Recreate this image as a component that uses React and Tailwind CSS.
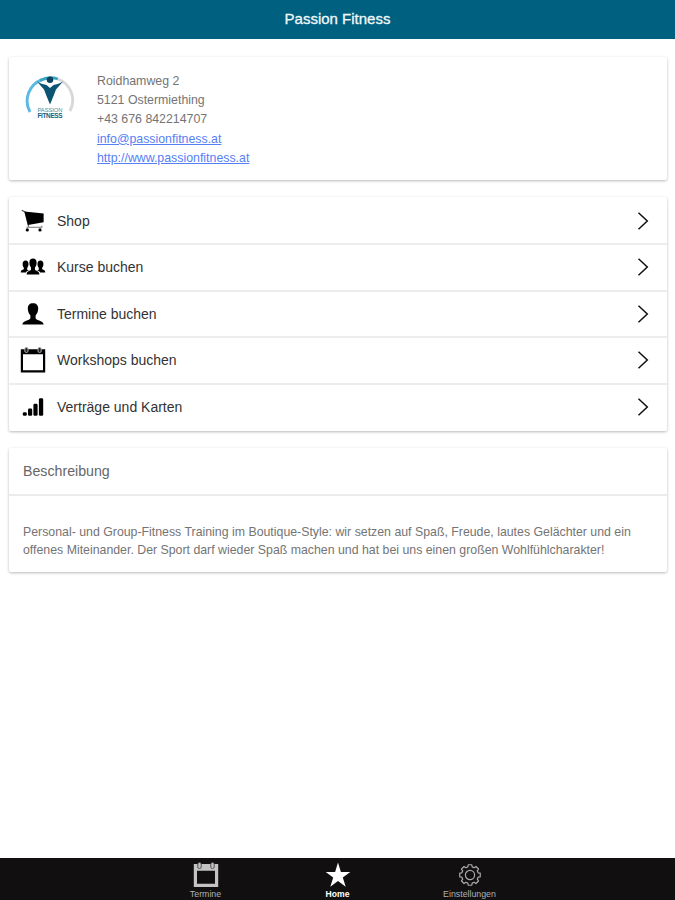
const menuItems = [
    { label: "Shop", icon: CartIcon },
    { label: "Kurse buchen", icon: GroupIcon },
    { label: "Termine buchen", icon: PersonIcon },
    { label: "Workshops buchen", icon: CalendarIcon },
    { label: "Verträge und Karten", icon: BarsIcon },
];

const cardShadow = "shadow-[0_1px_3px_rgba(0,0,0,0.28)]";

function CartIcon() {
    return (
        <svg width="26" height="26" viewBox="0 0 26 26">
            <path d="M1.800 2.200 L5 4 L8.600 18.600" fill="none" stroke="#555" strokeWidth="1.200" />
            <path d="M4.400 3.600 L23.600 5.600 V14.200 L8 17 Z" />
            <path d="M6.500 19.300 H21.800 V17.800" fill="none" stroke="#777" strokeWidth="1.100" />
            <circle cx="7.300" cy="21.900" r="1.600" />
            <circle cx="20" cy="21.900" r="1.600" />
        </svg>
    );
}

function GroupIcon() {
    return (
        <svg width="26" height="26" viewBox="0 0 26 26">
            <path d="M13 4.600c2.300 0 3.600 1.500 3.600 4.100 0 2-.6 3.600-1.600 4.800v2.300c.8 1.200 4.300 1.300 4.300 4.200v.5H6.700V20c0-2.900 3.500-3 4.300-4.200v-2.300c-1-1.200-1.600-2.800-1.600-4.800 0-2.600 1.300-4.100 3.600-4.100z" />
            <path
                id="side"
                d="M5.600 6.600c2 0 2.900 1.400 2.900 3.500 0 1.800-.5 3-1.300 3.800v1.500c.2.500.9.800 1.700 1.200-1.500.5-2.700 1.100-3 1.900H.8v-.5c0-2.200 2.500-2.100 3.100-3.300v-.8c-.8-.8-1.300-2-1.300-3.800 0-2.100 1-3.500 3-3.500z"
            />
            <use href="#side" transform="translate(26 0) scale(-1 1)" />
        </svg>
    );
}

function PersonIcon() {
    return (
        <svg width="26" height="26" viewBox="0 0 26 26">
            <path d="M13 2.200c3.500 0 5.200 2 5.200 5.400 0 2.900-1.100 5.300-2.600 6.800v2.800c.7 2.300 8 2.300 8 6.200H2.400c0-3.900 7.300-3.900 8-6.200v-2.800C8.900 12.900 7.800 10.500 7.800 7.600c0-3.400 1.700-5.400 5.200-5.400z" />
        </svg>
    );
}

function CalendarIcon() {
    return (
        <svg width="26" height="26" viewBox="0 0 26 26">
            <path fillRule="evenodd" d="M0.800 2.200h24.400v23.300H0.800z M3 7.300v16h20v-16z" />
            <g fill="#222" stroke="#aaa" strokeWidth="1">
                <rect x="4.800" y="0.500" width="3.200" height="5" rx="1.500" />
                <rect x="18" y="0.500" width="3.200" height="5" rx="1.500" />
            </g>
        </svg>
    );
}

function BarsIcon() {
    return (
        <svg width="26" height="26" viewBox="0 0 26 26">
            <rect x="2.800" y="18.200" width="4" height="3.600" rx="1.300" />
            <rect x="8" y="14.500" width="4.200" height="7.300" rx="1.300" />
            <rect x="13.400" y="9.800" width="4.200" height="12" rx="1.300" />
            <rect x="18.900" y="4.200" width="4.300" height="17.600" rx="1.300" />
        </svg>
    );
}

function Chevron() {
    return (
        <svg width="12" height="20" viewBox="0 0 12 20" fill="none" stroke="#111" strokeWidth="1.500">
            <path d="M1.500 1.800 L10.300 10 L1.500 18.200" />
        </svg>
    );
}

function GearIcon() {
    // 8 teeth around a circle
    const teeth = [0, 45, 90, 135, 180, 225, 270, 315];
    const points = teeth
        .flatMap((a) =>
            [
                [-15, 8.400],
                [-10, 10.400],
                [10, 10.400],
                [15, 8.400],
            ].map(([da, r]) => {
                const t = ((a + da) * Math.PI) / 180;
                return `${12 + r * Math.sin(t)},${12 - r * Math.cos(t)}`;
            })
        )
        .join(" ");

    return (
        <svg width="24" height="24" viewBox="0 0 24 24" fill="none" stroke="#aaa" strokeWidth="1.200">
            <polygon points={points} strokeLinejoin="round" />
            <circle cx="12" cy="12" r="4.600" />
        </svg>
    );
}

function StarIcon() {
    return (
        <svg width="26" height="26" viewBox="0 0 26 26" fill="#fff">
            <path d="M13 0.600 L15.900 9.900 L25.300 9.900 L17.800 15.500 L20.700 24.800 L13 19.100 L5.300 24.800 L8.200 15.500 L0.700 9.900 L10.100 9.900 Z" />
        </svg>
    );
}

function TabCalendarIcon() {
    return (
        <svg width="26" height="26" viewBox="0 0 26 26">
            <path fill="#c4c4c4" fillRule="evenodd" d="M0.800 2h24.400v23H0.800z M4 8.800v13h18v-13z" />
            <g fill="#c4c4c4" stroke="#444" strokeWidth="0.900">
                <rect x="4.800" y="0.500" width="3.400" height="6" rx="1.500" />
                <rect x="17.800" y="0.500" width="3.400" height="6" rx="1.500" />
            </g>
        </svg>
    );
}

function Logo() {
    return (
        <svg width="52" height="52" viewBox="0 0 52 52" className="block">
            <g fill="none" strokeWidth="2.900">
                <path d="M6 38 A22.800 22.800 0 0 1 18 5.600" stroke="#5bb9e2" />
                <path d="M16 6.500 A22.800 22.800 0 0 1 34 5" stroke="#3ba5c4" />
                <path d="M34 5 A22.800 22.800 0 0 1 46 37" stroke="#d6d8da" />
            </g>
            <circle cx="26" cy="5.800" r="3.300" fill="#0d4560" />
            <path
                d="M13 7.600 C17 9.800 20 10.900 22.500 10.900 L26 14 L29.500 10.900 C32 10.900 35 9.800 39 7.600 L32 15.500 L29.700 21.500 L26 30.500 L22.300 21.500 L20 15.500 Z"
                fill="#0d5472"
            />
            <text x="26" y="37.600" textAnchor="middle" fontSize="5.800" textLength="25" fill="#4b8a96">
                PASSION
            </text>
            <text x="26" y="43.700" textAnchor="middle" fontSize="6.400" fontWeight="bold" textLength="25" fill="#155d78">
                FITNESS
            </text>
        </svg>
    );
}

function TabItem({ label, icon, active }) {
    return (
        <div className={`flex w-[132px] flex-col items-center pt-[3px] ${active ? "text-white" : "text-[#b0b0b0]"}`}>
            <div className="flex h-[27px] items-center">{icon}</div>
            <span className={`leading-[12px] ${active ? "text-[8.600px] font-bold" : "text-[8.800px]"}`}>{label}</span>
        </div>
    );
}

export default function App() {
    return (
        <div className="flex h-[900px] w-[675px] flex-col bg-white font-['Liberation_Sans',sans-serif]">
            <header className="flex h-[39px] shrink-0 items-center justify-center bg-[#006080] text-[15px] text-[#f0f8fa] [-webkit-text-stroke:0.3px_#f0f8fa]">
                Passion Fitness
            </header>

            <main className="flex grow flex-col gap-[17px] pt-[18px] pr-[8px] pl-[9px]">
                <section className={`flex h-[123px] rounded-xs pt-[14.500px] pl-[15px] ${cardShadow}`}>
                    <div className="w-[73px] pt-[2px]">
                        <Logo />
                    </div>
                    <div className="text-[12.350px] leading-[19.400px] text-[#747474]">
                        <p>Roidhamweg 2</p>
                        <p>5121 Ostermiething</p>
                        <p>+43 676 842214707</p>
                        <p>
                            <a className="text-[#5580f5] underline">info@passionfitness.at</a>
                        </p>
                        <p>
                            <a className="text-[#5580f5] underline">http://www.passionfitness.at</a>
                        </p>
                    </div>
                </section>

                <ul className={`h-[234px] rounded-xs pt-[1.400px] ${cardShadow}`}>
                    {menuItems.map(({ label, icon: Icon }) => (
                        <li
                            key={label}
                            className="flex h-[46.600px] items-center border-b-2 border-[#ededed] pr-[18px] pl-[11px] text-[14px] text-[#333] last:border-transparent"
                        >
                            <Icon />
                            <span className="grow pt-px pl-[11px]">{label}</span>
                            <Chevron />
                        </li>
                    ))}
                </ul>

                <section className={`h-[124px] rounded-xs ${cardShadow}`}>
                    <h2 className="flex h-[48px] items-center border-b-2 border-[#ebebeb] px-[14px] pt-px text-[14.200px] text-[#666]">
                        Beschreibung
                    </h2>
                    <p className="px-[14px] pt-[27px] text-[12.330px] leading-[18px] whitespace-nowrap text-[#747474]">
                        Personal- und Group-Fitness Training im Boutique-Style: wir setzen auf Spaß, Freude, lautes Gelächter und ein
                        <br />
                        offenes Miteinander. Der Sport darf wieder Spaß machen und hat bei uns einen großen Wohlfühlcharakter!
                    </p>
                </section>
            </main>

            <nav className="flex h-[42px] shrink-0 justify-center bg-[#120f10]">
                <TabItem label="Termine" icon={<TabCalendarIcon />} />
                <TabItem label="Home" icon={<StarIcon />} active />
                <TabItem label="Einstellungen" icon={<GearIcon />} />
            </nav>
        </div>
    );
}
